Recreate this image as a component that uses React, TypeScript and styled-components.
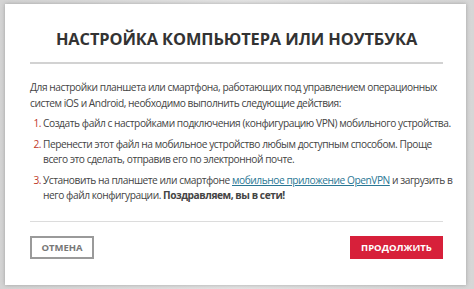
import React from 'react';
import styled, { createGlobalStyle } from 'styled-components';

const Global = createGlobalStyle`
  html, body {
    margin: 0;
    padding: 0;
    background: #d9d9d9;
    font-family: "Open Sans", "Noto Sans", sans-serif;
  }
`;

const Backdrop = styled.div`
  width: 474px;
  height: 289px;
  box-sizing: border-box;
  padding: 4px 8px 4px 5px;
  background: linear-gradient(90deg, #d4d4d4, #e4e4e4 50%, #d6d6d6);
  overflow: hidden;
`;

const Modal = styled.div`
  width: 461px;
  height: 281px;
  box-sizing: border-box;
  background: #fff;
  box-shadow: 0 0 4px rgba(0, 0, 0, 0.25);
  padding: 23px 23px 0 25px;
  display: flex;
  flex-direction: column;
`;

const Title = styled.h1`
  margin: 0 0 11px;
  font-size: 16.4px;
  letter-spacing: -0.1px;
  line-height: 24px;
  font-weight: 700;
  color: #333;
  text-align: center;
`;

const Rule = styled.hr<{ $thick?: boolean }>`
  margin: 0;
  border: none;
  height: ${p => (p.$thick ? '2px' : '1px')};
  background: ${p => (p.$thick ? '#d2d2d2' : '#dcdcdc')};
`;

const Body = styled.div`
  padding: 16px 0 17px;
  font-size: 10.2px;
  letter-spacing: -0.45px;
  line-height: 15.5px;
  white-space: nowrap;
  color: #444;
`;

const Para = styled.p`
  margin: 0 0 5px;
`;

const List = styled.ol`
  list-style: none;
  margin: 0;
  padding: 0;
  display: flex;
  flex-direction: column;
  gap: 5px;
`;

const Item = styled.li`
  display: flex;
`;

const Num = styled.span`
  flex: 0 0 13px;
  text-align: right;
  padding-right: 2px;
  box-sizing: border-box;
  color: #c0392b;
`;

const Link = styled.a`
  color: #2a7795;
  text-decoration: underline;
`;

const Footer = styled.div`
  display: flex;
  justify-content: space-between;
  padding-top: 14px;
`;

const Button = styled.button<{ $primary?: boolean }>`
  height: 23px;
  box-sizing: border-box;
  padding: 0;
  font-family: inherit;
  font-size: 9.5px;
  font-weight: 700;
  border: ${p => (p.$primary ? 'none' : '2px solid #9a9a9a')};
  background: ${p => (p.$primary ? '#d7203a' : '#fff')};
  color: ${p => (p.$primary ? '#fff' : '#777')};
  width: ${p => (p.$primary ? '93px' : '64px')};
`;

const steps: React.ReactNode[] = [
  'Создать файл с настройками подключения (конфигурацию VPN) мобильного устройства.',
  <>
    Перенести этот файл на мобильное устройство любым доступным способом. Проще
    <br />
    всего это сделать, отправив его по электронной почте.
  </>,
  <>
    Установить на планшете или смартфоне <Link href="#">мобильное приложение OpenVPN</Link> и загрузить в
    <br />
    него файл конфигурации. <b>Поздравляем, вы в сети!</b>
  </>,
];

export default function App() {
  return (
    <>
      <Global />
      <Backdrop>
        <Modal>
          <Title>НАСТРОЙКА КОМПЬЮТЕРА ИЛИ НОУТБУКА</Title>
          <Rule $thick />
          <Body>
            <Para>
              Для настройки планшета или смартфона, работающих под управлением операционных
              <br />
              систем iOS и Android, необходимо выполнить следующие действия:
            </Para>
            <List>
              {steps.map((s, i) => (
                <Item key={i}>
                  <Num>{i + 1}.</Num>
                  <span>{s}</span>
                </Item>
              ))}
            </List>
          </Body>
          <Rule />
          <Footer>
            <Button>ОТМЕНА</Button>
            <Button $primary>ПРОДОЛЖИТЬ</Button>
          </Footer>
        </Modal>
      </Backdrop>
    </>
  );
}
